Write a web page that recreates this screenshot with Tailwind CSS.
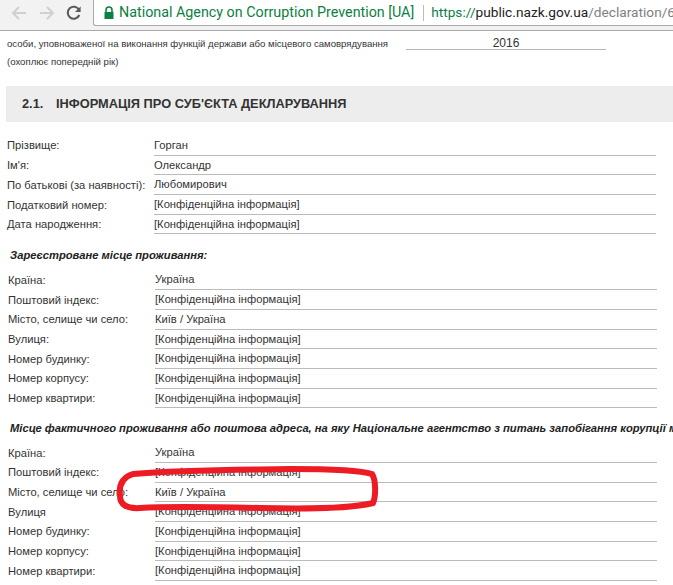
<!DOCTYPE html>
<html><head><meta charset="utf-8"><script src="https://cdn.jsdelivr.net/npm/@tailwindcss/browser@4"></script></head>
<body class="bg-white">
<div class="relative w-[673px] h-[585px] overflow-hidden bg-white font-['Liberation_Sans',Arial,sans-serif] text-[11.2px] text-[#333]">
  <header class="h-[31px] bg-[#f2f2f2] border-b border-[#a9a9a9] flex items-start">
    <div class="w-[93px] h-[25px] flex items-center shrink-0">
      <svg class="ml-[10px]" width="18" height="18" viewBox="0 0 18 18" fill="none" stroke="#d0d0d0" stroke-width="2"><path d="M16 9H3M9 3L3 9l6 6"/></svg>
      <svg class="ml-[10px]" width="18" height="18" viewBox="0 0 18 18" fill="none" stroke="#d0d0d0" stroke-width="2"><path d="M2 9h13M9 3l6 6-6 6"/></svg>
      <svg class="ml-[9px]" width="18" height="18" viewBox="0 0 18 18" fill="none"><path d="M14.3 11A6 6 0 1 1 14 5.8" stroke="#5a5a5a" stroke-width="2.1"/><path d="M15.6 2.4V8H10z" fill="#5a5a5a"/></svg>
    </div>
    <div class="flex-1 h-[26px] bg-white rounded-bl-[3px] border-l border-b border-[#a9a9a9] flex items-center whitespace-nowrap overflow-hidden font-['Roboto',sans-serif] text-[14.3px]">
      <svg class="ml-[9px] shrink-0" width="12" height="14" viewBox="0 0 12 14"><path d="M3 6V4a3 3 0 0 1 6 0v2" fill="none" stroke="#0b8043" stroke-width="1.6"/><rect x="1.5" y="6" width="9" height="7" fill="#0b8043"/></svg>
      <span class="ml-[4px] text-[#0b8043]">National Agency on Corruption Prevention [UA]</span>
      <span class="ml-[9px] w-px h-[16px] bg-[#bdbdbd] shrink-0"></span>
      <span class="ml-[7px] text-[13.7px]"><span class="text-[#0b8043]">https://</span><span class="text-[#222]">public.nazk.gov.ua</span><span class="text-[#808080]">/declaration/6</span></span>
    </div>
  </header>

  <div class="h-[55px]">
    <div class="flex items-start pt-[7px] pl-[7px] h-[25px]">
      <span class="w-[399px] text-[9.6px] leading-[12px] shrink-0 whitespace-nowrap">особи, уповноваженої на виконання функцій держави або місцевого самоврядування</span>
      <span class="w-[200px] h-[12px] border-b border-[#b5b5b5] text-center text-[12px] leading-[11px]">2016</span>
    </div>
    <div class="pl-[7px] text-[9.6px] leading-[12px]">(охоплює попередній рік)</div>
  </div>

  <h2 class="ml-[6px] h-[36px] bg-[#ededed] flex items-center pl-[16px] text-[12.8px] font-bold text-[#333] whitespace-nowrap">
    <span class="w-[34px]">2.1.</span><span>ІНФОРМАЦІЯ ПРО СУБ'ЄКТА ДЕКЛАРУВАННЯ</span>
  </h2>

  <section class="mt-[14px] pl-[7px] w-[656px]">
    <div class="flex h-[19.7px] items-center"><span class="w-[147px] shrink-0 whitespace-nowrap">Прізвище:</span><span class="flex-1 h-full border-b border-[#bbb] leading-[18px]">Горган</span></div>
    <div class="flex h-[19.7px] items-center"><span class="w-[147px] shrink-0 whitespace-nowrap">Ім'я:</span><span class="flex-1 h-full border-b border-[#bbb] leading-[18px]">Олександр</span></div>
    <div class="flex h-[19.7px] items-center"><span class="w-[147px] shrink-0 whitespace-nowrap">По батькові (за наявності):</span><span class="flex-1 h-full border-b border-[#bbb] leading-[18px]">Любомирович</span></div>
    <div class="flex h-[19.7px] items-center"><span class="w-[147px] shrink-0 whitespace-nowrap">Податковий номер:</span><span class="flex-1 h-full border-b border-[#bbb] leading-[18px]">[Конфіденційна інформація]</span></div>
    <div class="flex h-[19.7px] items-center"><span class="w-[147px] shrink-0 whitespace-nowrap">Дата народження:</span><span class="flex-1 h-full border-b border-[#bbb] leading-[18px]">[Конфіденційна інформація]</span></div>
  </section>

  <h3 class="mt-[14px] pl-[10px] h-[15px] leading-[15px] text-[11.2px] font-bold italic text-[#222] whitespace-nowrap">Зареєстроване місце проживання:</h3>

  <section class="mt-[7px] pl-[8px] w-[657px]">
    <div class="flex h-[19.7px] items-center"><span class="w-[147px] shrink-0 whitespace-nowrap">Країна:</span><span class="flex-1 h-full border-b border-[#bbb] leading-[18px]">Україна</span></div>
    <div class="flex h-[19.7px] items-center"><span class="w-[147px] shrink-0 whitespace-nowrap">Поштовий індекс:</span><span class="flex-1 h-full border-b border-[#bbb] leading-[18px]">[Конфіденційна інформація]</span></div>
    <div class="flex h-[19.7px] items-center"><span class="w-[147px] shrink-0 whitespace-nowrap">Місто, селище чи село:</span><span class="flex-1 h-full border-b border-[#bbb] leading-[18px]">Київ / Україна</span></div>
    <div class="flex h-[19.7px] items-center"><span class="w-[147px] shrink-0 whitespace-nowrap">Вулиця:</span><span class="flex-1 h-full border-b border-[#bbb] leading-[18px]">[Конфіденційна інформація]</span></div>
    <div class="flex h-[19.7px] items-center"><span class="w-[147px] shrink-0 whitespace-nowrap">Номер будинку:</span><span class="flex-1 h-full border-b border-[#bbb] leading-[18px]">[Конфіденційна інформація]</span></div>
    <div class="flex h-[19.7px] items-center"><span class="w-[147px] shrink-0 whitespace-nowrap">Номер корпусу:</span><span class="flex-1 h-full border-b border-[#bbb] leading-[18px]">[Конфіденційна інформація]</span></div>
    <div class="flex h-[19.7px] items-center"><span class="w-[147px] shrink-0 whitespace-nowrap">Номер квартири:</span><span class="flex-1 h-full border-b border-[#bbb] leading-[18px]">[Конфіденційна інформація]</span></div>
  </section>

  <h3 class="mt-[13px] pl-[10px] h-[15px] leading-[15px] text-[11.2px] font-bold italic text-[#222] whitespace-nowrap">Місце фактичного проживання або поштова адреса, на яку Національне агентство з питань запобігання корупції має</h3>

  <section class="mt-[7px] pl-[8px] w-[657px]">
    <div class="flex h-[19.7px] items-center"><span class="w-[147px] shrink-0 whitespace-nowrap">Країна:</span><span class="flex-1 h-full border-b border-[#bbb] leading-[18px]">Україна</span></div>
    <div class="flex h-[19.7px] items-center"><span class="w-[147px] shrink-0 whitespace-nowrap">Поштовий індекс:</span><span class="flex-1 h-full border-b border-[#bbb] leading-[18px]">[Конфіденційна інформація]</span></div>
    <div class="flex h-[19.7px] items-center"><span class="w-[147px] shrink-0 whitespace-nowrap">Місто, селище чи село:</span><span class="flex-1 h-full border-b border-[#bbb] leading-[18px]">Київ / Україна</span></div>
    <div class="flex h-[19.7px] items-center"><span class="w-[147px] shrink-0 whitespace-nowrap">Вулиця</span><span class="flex-1 h-full border-b border-[#bbb] leading-[18px]">[Конфіденційна інформація]</span></div>
    <div class="flex h-[19.7px] items-center"><span class="w-[147px] shrink-0 whitespace-nowrap">Номер будинку:</span><span class="flex-1 h-full border-b border-[#bbb] leading-[18px]">[Конфіденційна інформація]</span></div>
    <div class="flex h-[19.7px] items-center"><span class="w-[147px] shrink-0 whitespace-nowrap">Номер корпусу:</span><span class="flex-1 h-full border-b border-[#bbb] leading-[18px]">[Конфіденційна інформація]</span></div>
    <div class="flex h-[19.7px] items-center"><span class="w-[147px] shrink-0 whitespace-nowrap">Номер квартири:</span><span class="flex-1 h-full border-b border-[#bbb] leading-[18px]">[Конфіденційна інформація]</span></div>
  </section>

  <svg class="absolute left-0 top-0 pointer-events-none" width="673" height="585" viewBox="0 0 673 585" fill="none">
    <path d="M133 474 C180 470 230 470 290 469 C325 469 360 470 372 474 C376 480 376 496 373 503 C350 509 300 509 260 508 C215 507 170 506 140 508 C126 509 120 504 120 496 C119 488 120 478 133 474 Z" stroke="#ed1c24" stroke-width="6"/>
  </svg>
</div>
</body></html>
